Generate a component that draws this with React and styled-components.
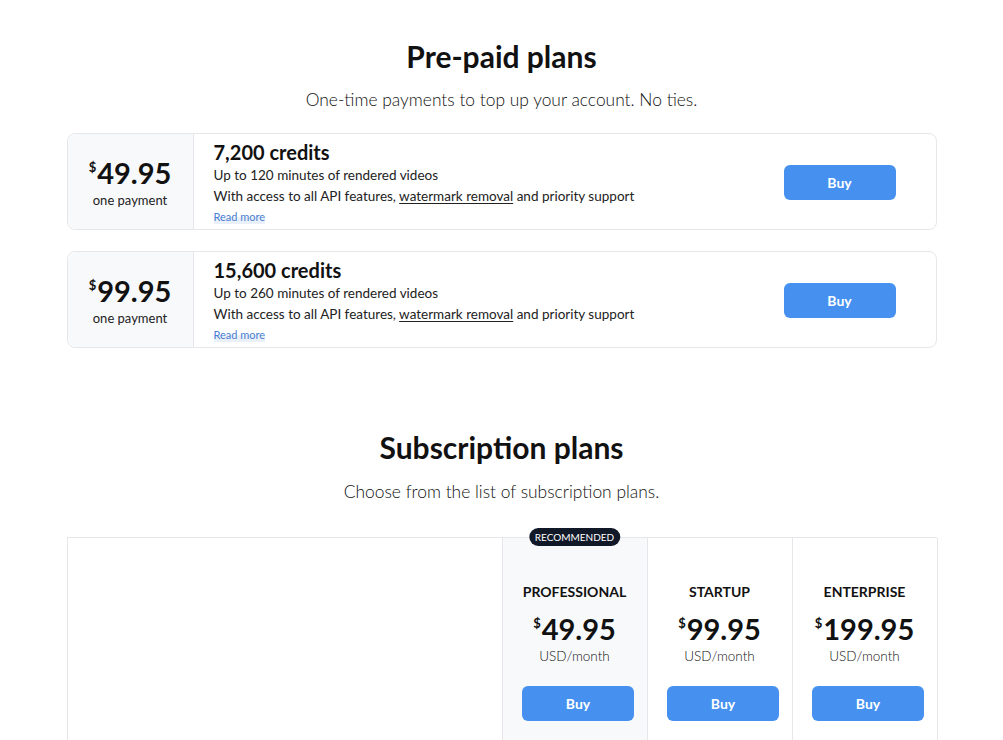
import React from 'react'
import styled, { createGlobalStyle } from 'styled-components'

const Global = createGlobalStyle`
  body {
    margin: 0;
    background: #ffffff;
    font-family: Lato, "Noto Sans", sans-serif;
    color: #111111;
  }
`

const Page = styled.div`
  width: 870px;
  margin: 0 auto;
  padding-top: 35px;
`

const Section = styled.section`
  display: flex;
  flex-direction: column;
  align-items: stretch;
  margin-bottom: ${p => p.$gap || 0}px;
`

const Title = styled.h2`
  margin: 0;
  text-align: center;
  font-size: 30px;
  font-weight: 700;
  line-height: 42px;
  color: #111;
`

const Subtitle = styled.p`
  margin: ${p => p.$top ?? 12}px 0 ${p => p.$bottom ?? 22}px;
  text-align: center;
  font-size: 17.4px;
  font-weight: 300;
  line-height: 22px;
  color: #111;
`

const CardList = styled.div`
  display: flex;
  flex-direction: column;
  gap: 21px;
`

const Card = styled.div`
  display: flex;
  height: 97px;
  box-sizing: border-box;
  border: 1px solid #e5e7eb;
  border-radius: 8px;
  overflow: hidden;
`

const PriceCol = styled.div`
  width: 125px;
  flex-shrink: 0;
  background: #f8f9fb;
  border-right: 1px solid #e5e7eb;
  display: flex;
  flex-direction: column;
  align-items: center;
  justify-content: center;
  padding-top: 2px;
`

const Price = styled.div`
  display: flex;
  align-items: flex-start;
  font-size: 29px;
  font-weight: 700;
  line-height: 32px;
  color: #111;
  span.cur {
    font-size: 13px;
    line-height: 20px;
    margin-right: 1px;
  }
`

const PriceNote = styled.div`
  font-size: 13px;
  font-weight: 400;
  color: #222;
  line-height: 18px;
  margin-top: 2px;
`

const Body = styled.div`
  flex: 1;
  padding: 6px 20px 0;
  display: flex;
  flex-direction: column;
`

const CardTitle = styled.div`
  font-size: 20px;
  font-weight: 700;
  line-height: 24px;
  margin-bottom: 1px;
  color: #111;
`

const Line = styled.div`
  font-size: 13.5px;
  line-height: 21px;
  color: #222;
  u {
    text-decoration: underline;
    text-underline-offset: 2px;
  }
`

const ReadMore = styled.a`
  align-self: flex-start;
  font-size: 11px;
  line-height: 14px;
  margin-top: 3px;
  color: #4a7fd0;
  text-decoration: none;
  background: linear-gradient(transparent 50%, #eaf0f9 50%);
`

const Aside = styled.div`
  display: flex;
  align-items: center;
  padding-right: 40px;
`

const BuyButton = styled.button`
  width: 112px;
  height: 35px;
  border: none;
  border-radius: 6px;
  background: #4691ef;
  color: #fff;
  font-family: Lato, "Noto Sans", sans-serif;
  font-size: 14px;
  font-weight: 700;
  cursor: pointer;
  margin-top: ${p => p.$top || 0}px;
  margin-left: ${p => p.$left || 0}px;
`

const Table = styled.div`
  display: grid;
  grid-template-columns: 435px repeat(3, 145px);
  border-top: 1px solid #e5e7eb;
  border-left: 1px solid #e5e7eb;
  height: 204px;
  margin-top: 34px;
`

const Cell = styled.div`
  position: relative;
  border-right: 1px solid #e5e7eb;
  background: ${p => (p.$highlight ? '#f8f9fb' : '#fff')};
  display: flex;
  flex-direction: column;
  align-items: center;
  padding-top: 45px;
  box-sizing: border-box;
`

const Badge = styled.div`
  position: absolute;
  top: -10px;
  left: 50%;
  transform: translateX(-50%);
  background: #111827;
  color: #fff;
  font-size: 10px;
  font-weight: 400;
  line-height: 18px;
  padding: 0 6px;
  border-radius: 9px;
  white-space: nowrap;
`

const PlanName = styled.div`
  font-size: 14px;
  font-weight: 700;
  line-height: 18px;
  color: #111;
`

const PlanPrice = styled(Price)`
  margin-top: 12px;
`

const PlanNote = styled.div`
  font-size: 13.5px;
  font-weight: 300;
  color: #111;
  line-height: 18px;
  margin-top: 2px;
`

const prepaid = [
  { price: '49.95', credits: '7,200 credits', minutes: 120 },
  { price: '99.95', credits: '15,600 credits', minutes: 260 },
]

const plans = [
  { name: 'PROFESSIONAL', price: '49.95', recommended: true },
  { name: 'STARTUP', price: '99.95' },
  { name: 'ENTERPRISE', price: '199.95' },
]

export default function App() {
  return (
    <>
      <Global />
      <Page>
        <Section $gap={78}>
          <Title>Pre-paid plans</Title>
          <Subtitle>One-time payments to top up your account. No ties.</Subtitle>
          <CardList>
            {prepaid.map(p => (
              <Card key={p.price}>
                <PriceCol>
                  <Price>
                    <span className="cur">$</span>
                    {p.price}
                  </Price>
                  <PriceNote>one payment</PriceNote>
                </PriceCol>
                <Body>
                  <CardTitle>{p.credits}</CardTitle>
                  <Line>Up to {p.minutes} minutes of rendered videos</Line>
                  <Line>
                    With access to all API features, <u>watermark removal</u> and priority support
                  </Line>
                  <ReadMore href="#">Read more</ReadMore>
                </Body>
                <Aside>
                  <BuyButton $top={1}>Buy</BuyButton>
                </Aside>
              </Card>
            ))}
          </CardList>
        </Section>
        <Section>
          <Title>Subscription plans</Title>
          <Subtitle $top={13} $bottom={0}>Choose from the list of subscription plans.</Subtitle>
          <Table>
            <Cell />
            {plans.map(plan => (
              <Cell key={plan.name} $highlight={plan.recommended}>
                {plan.recommended && <Badge>RECOMMENDED</Badge>}
                <PlanName>{plan.name}</PlanName>
                <PlanPrice>
                  <span className="cur">$</span>
                  {plan.price}
                </PlanPrice>
                <PlanNote>USD/month</PlanNote>
                <BuyButton $top={21} $left={7}>Buy</BuyButton>
              </Cell>
            ))}
          </Table>
        </Section>
      </Page>
    </>
  )
}
